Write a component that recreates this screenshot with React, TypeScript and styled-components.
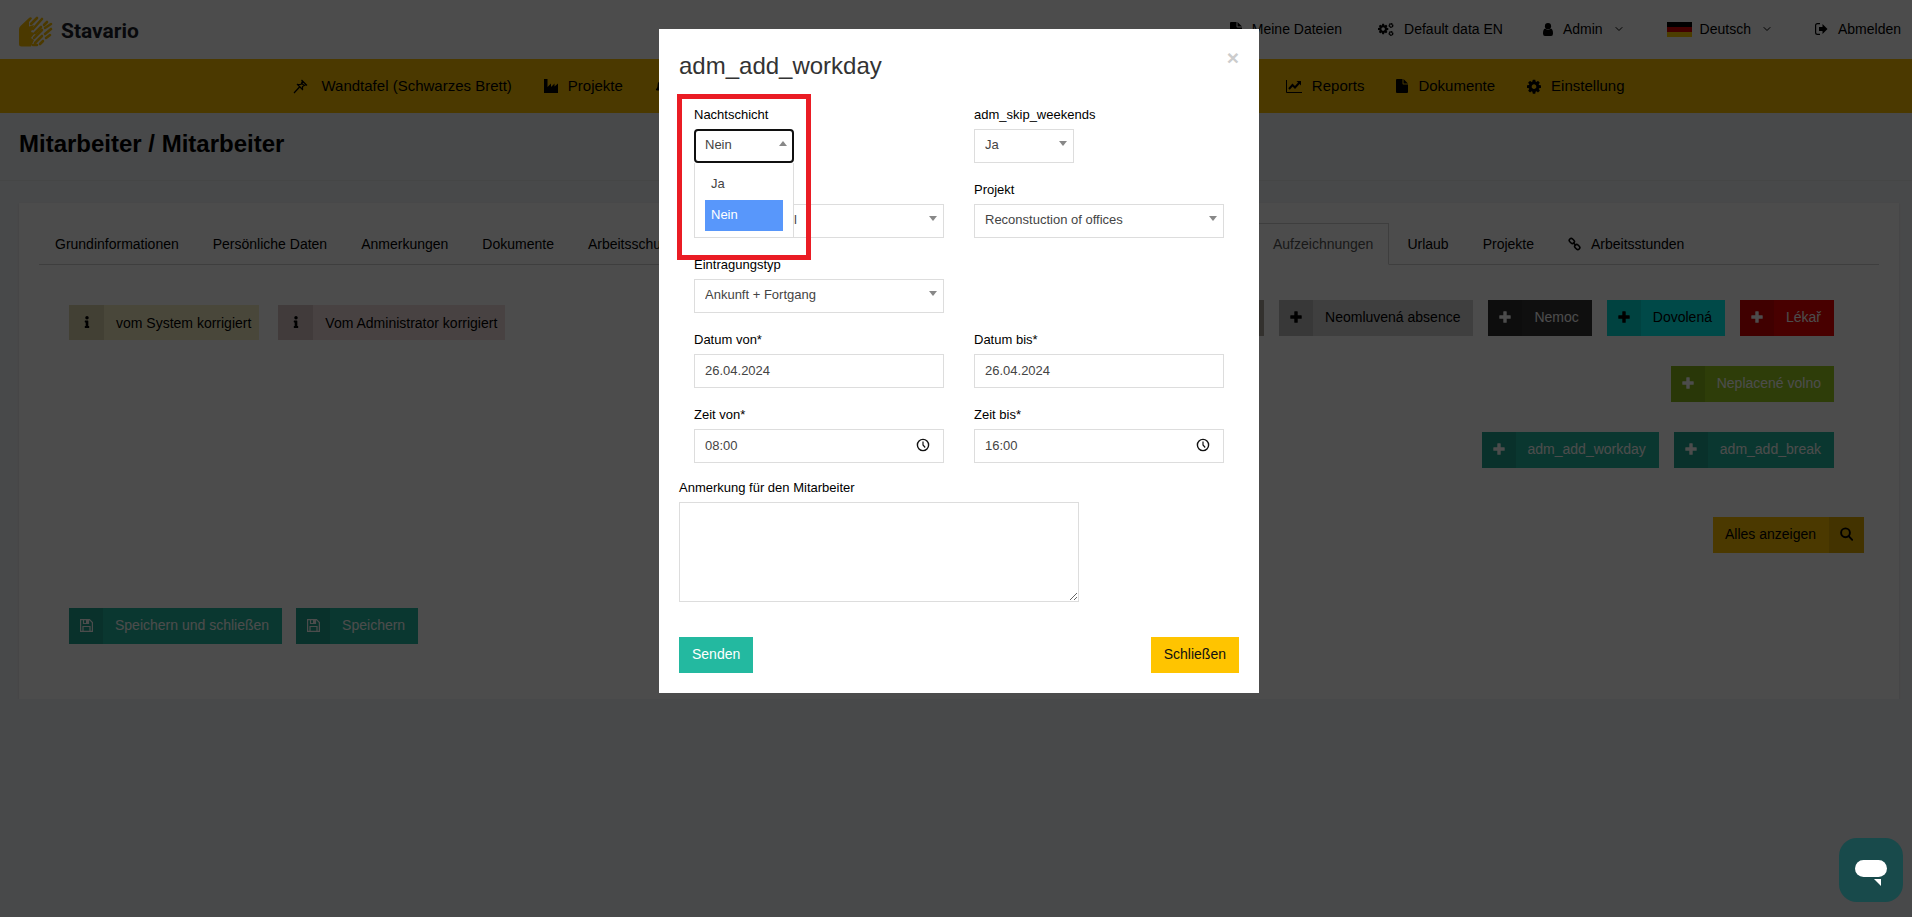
import React from "react";
import styled, { createGlobalStyle } from "styled-components";
import { FaInfo, FaBell } from "react-icons/fa";
import { FiChevronDown } from "react-icons/fi";

const Global = createGlobalStyle`
  * { box-sizing: border-box; }
  html, body { margin: 0; min-height: 100%; background: #f1f3f7; }
  body { overflow: hidden; font: 14px/20px "Liberation Sans", Arial, sans-serif; color: #000; }
  button, input, select, textarea { font: inherit; color: inherit; }
  a { color: inherit; text-decoration: none; }
  svg { flex: none; }
`;

const Header = styled.header`
  height: 59px; padding: 0 11px 0 18px; background: #fff;
  display: flex; align-items: center; justify-content: space-between;
`;
const Brand = styled.a`
  display: flex; align-items: center; gap: 8px; padding-top: 3px;
  font: 700 21px/30px Roboto, sans-serif; color: #1c1e2b;
`;
const TopLinks = styled.nav`display: flex; align-items: center; padding-bottom: 1px;`;
const TopLink = styled.a<{ $space: number }>`
  display: flex; align-items: center; gap: 10px; margin-left: ${(p) => p.$space}px;
`;
const Flag = styled.span`
  width: 25px; height: 15px; margin-right: -2px;
  background: linear-gradient(#000 0 5px, #d00 5px 10px, #fc0 10px 15px);
`;
const MainNav = styled.nav`
  height: 54px; padding-left: 6px; background: #fbc000; font-size: 15px;
  display: flex; align-items: center; justify-content: center; gap: 32px;
`;
const NavLink = styled.a<{ $gap?: number }>`
  display: flex; align-items: center; gap: ${(p) => p.$gap ?? 10}px;
`;
const NavRest = styled.span`width: 553px;`;
const Heading = styled.div`
  height: 68px; padding: 17px 19px; border-bottom: 1px solid #e7eaec;
`;
const PageTitle = styled.h1`margin: 0; font-size: 24px; line-height: 28px;`;
const Card = styled.main`
  margin: 22px 13px 0 19px; padding: 20px 20px 55px; min-height: 496px; background: #fff;
  box-shadow: 0 1px 2px rgba(0,0,0,.1);
`;
const Tabs = styled.nav`display: flex; gap: 2px; border-bottom: 1px solid #d0d0d0;`;
const Tab = styled.a<{ $active?: boolean }>`
  display: flex; align-items: center; gap: 10px; height: 42px; padding: 0 15px; margin-bottom: -1px;
  border: 1px solid transparent;
  ${(p) => p.$active && "border-color: #d0d0d0 #d0d0d0 #fff;"}
  color: ${(p) => (p.$active ? "#555" : "#000")}; background: ${(p) => (p.$active ? "#fff" : "none")};
`;
const TabRest = styled.span`width: 565px;`;
const Records = styled.section`
  display: flex; justify-content: space-between; padding: 35px 45px 0 30px;
`;
const Legend = styled.div`display: flex; gap: 19px; padding-top: 5px;`;
const LegendItem = styled.span<{ $bg: string }>`
  display: flex; align-items: center; height: 35px; padding-right: 8px; background: ${(p) => p.$bg};
`;
const IconCell = styled.span<{ $wide?: boolean }>`
  width: ${(p) => (p.$wide ? 35 : 34)}px; height: 100%; background: rgba(0,0,0,.1);
  display: flex; align-items: center; justify-content: center; padding-bottom: 2px;
`;
const LegendText = styled.span`padding-left: 12px;`;
const ActionRows = styled.div`display: flex; flex-direction: column; align-items: flex-end; gap: 30px;`;
const ButtonRow = styled.div`display: flex; gap: 15px;`;
const SaveRow = styled(ButtonRow)`gap: 14px; padding: 55px 30px 0;`;
const ShowRow = styled(ButtonRow)`justify-content: flex-end; padding: 49px 15px 0;`;
const ActionButton = styled.button<{ $bg: string; $fg?: string }>`
  display: flex; align-items: center; height: 36px; padding: 0; border: 0;
  background: ${(p) => p.$bg}; color: ${(p) => p.$fg ?? "#fff"};
`;
const ActionStub = styled.span`width: 60px; height: 36px; background: #aaa49a;`;
const ButtonText = styled.span`padding: 0 13px 2px 12px; white-space: nowrap;`;

const Backdrop = styled.div`
  position: fixed; inset: 0; background: rgba(0,0,0,.7);
  display: flex; align-items: flex-start; justify-content: center; padding: 29px 0 0 6px;
`;
const Modal = styled.form`
  position: relative; width: 600px; padding: 21px 20px 20px; background: #fff;
  font-size: 13px; line-height: 19px;
`;
const ModalTitle = styled.h2`margin: 0 0 23px; font-size: 24px; line-height: 32px; font-weight: 400; color: #333;`;
const CloseX = styled.button`
  position: absolute; top: 18px; right: 20px; padding: 0; border: 0; background: none;
  font-size: 21px; line-height: 21px; font-weight: 700; color: #ccc;
`;
const Fields = styled.div`
  display: grid; grid-template-columns: 250px 250px; column-gap: 30px; row-gap: 17px; padding: 0 15px;
`;
const Field = styled.div<{ $col?: number }>`
  display: flex; flex-direction: column; gap: 5px;
  grid-column: ${(p) => p.$col ?? "auto"}; justify-content: flex-end;
`;
const SelectBox = styled.div<{ $short?: boolean; $open?: boolean }>`
  position: relative; width: ${(p) => (p.$short ? "100px" : "100%")};
  &::after {
    content: ""; position: absolute; right: 7px; top: 12px; border: 4px solid transparent;
    ${(p) => (p.$open ? "border-bottom: 5px solid #888; border-top: 0;" : "border-top: 5px solid #888; border-bottom: 0;")}
  }
`;
const Select = styled.select<{ $open?: boolean; $covered?: boolean }>`
  appearance: none; display: block; width: 100%; height: 34px; background: #fff; color: #444;
  outline: 0;
  border: ${(p) => (p.$open ? "2px solid #101010" : "1px solid #ddd")};
  border-radius: ${(p) => (p.$open ? 4 : 0)}px;
  padding: ${(p) => (p.$open ? "0 9px 3px" : p.$covered ? "0 10px 4px 99px" : "0 10px 4px")};
`;
const Input = styled.input`
  display: block; height: 34px; padding: 0 10px 2px; border: 1px solid #ddd; background: #fff; color: #444; width: 100%;
`;
const TimeBox = styled.div`
  position: relative;
  svg { position: absolute; right: 14px; top: 9px; }
`;
const Options = styled.div`
  position: absolute; z-index: 1; top: 100%; left: 0; width: 100px; height: 74px; padding: 6px 10px 0;
  background: #fff; border: 1px solid #ddd; border-width: 0 1px;
`;
const Option = styled.div<{ $on?: boolean }>`
  height: 31px; padding: 5px 6px 7px; color: ${(p) => (p.$on ? "#fff" : "#444")};
  background: ${(p) => (p.$on ? "#5897fb" : "none")};
`;
const Note = styled.div`
  display: flex; flex-direction: column; gap: 5px; padding-top: 15px;
`;
const TextArea = styled.textarea`width: 400px; height: 100px; border: 1px solid #ddd; display: block; resize: both;`;
const ModalFooter = styled.div`display: flex; justify-content: space-between; padding-top: 35px;`;
const FooterButton = styled.button<{ $main?: boolean }>`
  height: 36px; padding: 0 13px 2px; border: 0; font-size: 14px;
  background: ${(p) => (p.$main ? "#23b9a0" : "#ffc400")};
  color: ${(p) => (p.$main ? "#fff" : "#111")};
`;
const Highlight = styled.div`
  position: absolute; z-index: 2; left: 18px; top: 65px; width: 134px; height: 166px;
  border: 5px solid #ea1c24; pointer-events: none;
`;
const Chat = styled.button`
  position: fixed; right: 9px; bottom: 15px; width: 64px; height: 64px; padding: 0;
  border: 0; border-radius: 18px; background: #184a4b;
  svg { display: block; }
`;

const COG =
  "M1024 896q0-106-75-181t-181-75-181 75-75 181 75 181 181 75 181-75 75-181zm512-109v222q0 12-8 23t-20 13l-185 28q-19 54-39 91 35 50 107 138 10 12 10 25t-9 23q-27 37-99 108t-94 71q-12 0-26-9l-138-108q-44 23-91 38-16 136-29 186-7 28-36 28h-222q-14 0-24.500-8.500t-11.500-21.500l-28-184q-49-16-90-37l-141 107q-10 9-25 9-14 0-25-11-126-114-165-168-7-10-7-23 0-12 8-23 15-21 51-66.500t54-70.500q-27-50-41-99l-183-27q-13-2-21-12.500t-8-23.500v-222q0-12 8-23t19-13l186-28q14-46 39-92-40-57-107-138-10-12-10-24 0-10 9-23 26-36 98.500-107.500t94.500-71.500q13 0 26 10l138 107q44-23 91-38 16-136 29-186 7-28 36-28h222q14 0 24.500 8.500t11.500 21.500l28 184q49 16 90 37l142-107q9-9 24-9 13 0 25 10 129 119 165 170 7 8 7 22 0 12-8 23-15 21-51 66.500t-54 70.500q26 50 41 98l183 28q13 2 21 12.500t8 23.500z";

const Logo = () => (
  <svg width="35" height="31" viewBox="0 0 35 31" fill="none" stroke="#fbc000" strokeLinecap="round">
    <path d="M1 13Q1 11 3 9.500L11 2Q13 .5 14 2.500L11 6v4.500L16 9l-3 7 4 1-4 5 3 2-3 6.500H3.500Q1 30.500 1 28Z" fill="#fbc000" stroke="none" />
    <path d="M13 8l6-6M15 13 24 3M17 17l6-6M26 9l3-3M16 22l8-8M27 12l6-4M17 27l7-7M27 18l6-5M22 28l3-3M28 22l4-3M15 29h4" strokeWidth="2.600" />
  </svg>
);
const Factory = () => (
  <svg width="14" height="14" viewBox="0 0 14 14"><path d="M0 0h3.500v8l3.500-3.500v3.500l3.500-3.500v3l3.500-3v9.500H0Z" /></svg>
);
const Pin = () => (
  <svg width="15" height="15" viewBox="0 0 15 15" fill="none" stroke="#000" strokeWidth="1.200">
    <path d="M8.500 1l5.500 5.500M9.500 2 8 5.500 4.500 5.500M13 5.500 9.500 7.500V11M4 5l6 6M6.500 8 1 14M9 4.500l2 2" />
  </svg>
);
const Graph = () => (
  <svg width="16" height="14" viewBox="0 0 16 14" fill="none" stroke="#000">
    <path d="M.5 1v12.500H16" /><path d="M3 10l3.500-4 2.500 2.500L13.500 3.500" strokeWidth="2" /><path d="M10.500 2H15V6.500Z" fill="#000" stroke="none" />
  </svg>
);
const Cog = () => <svg width="14" height="15" viewBox="0 80 1536 1600"><path d={COG} /></svg>;
const Cogs = () => (
  <svg width="16" height="15" viewBox="0 0 16 15" fill="none" stroke="#000">
    <path d={COG} transform="translate(0 1) scale(.0067)" fill="#000" stroke="none" />
    <circle cx="13" cy="3.500" r="1.700" strokeWidth="1.500" strokeDasharray="1.500 .3" />
    <circle cx="13" cy="11.500" r="1.700" strokeWidth="1.500" strokeDasharray="1.500 .3" />
  </svg>
);
const Doc = () => (
  <svg width="12" height="14" viewBox="0 0 12 14"><path d="M0 1Q0 0 1 0H6.500V4.500Q6.500 5.500 7.500 5.500H12V13Q12 14 11 14H1Q0 14 0 13ZM7.500 0 12 4.500H7.500Z" /></svg>
);
const Person = () => (
  <svg width="10" height="13" viewBox="0 0 10 13"><circle cx="5" cy="3.200" r="3.100" /><path d="M2.200 5.500Q5 8 7.800 5.500 10 6 10 10.500 10 13 8 13H2Q0 13 0 10.500 0 6 2.200 5.500Z" /></svg>
);
const Exit = () => (
  <svg width="13" height="12" viewBox="0 0 13 12"><path d="M5 .6H2.500Q.6.6.6 2.500v7Q.6 11.400 2.500 11.400H5" fill="none" stroke="#000" strokeWidth="1.200" /><path d="M4 4h3.500V1L12.500 6 7.500 11V8H4Z" /></svg>
);
const Chain = () => (
  <svg width="13" height="14" viewBox="0 0 13 14" fill="none" stroke="#000" strokeWidth="1.600">
    <rect x="-1.900" y="-2.800" width="3.900" height="5.600" rx="1.900" transform="translate(3.800 4) rotate(-45)" />
    <rect x="-1.900" y="-2.800" width="3.900" height="5.600" rx="1.900" transform="translate(9.200 10) rotate(-45)" />
    <path d="M5 5.500l3 3" />
  </svg>
);
const Lens = () => (
  <svg width="13" height="14" viewBox="0 0 13 14" fill="none" stroke="currentColor" strokeWidth="1.900">
    <circle cx="5.500" cy="5.800" r="4.400" /><path d="M8.700 9.200l3.500 3.600" strokeLinecap="round" />
  </svg>
);
const Plus = () => (
  <svg width="12" height="12" viewBox="0 0 12 12" fill="currentColor">
    <path d="M4.300.8Q4.300.3 4.800.3H7.200Q7.700.3 7.700.8V4.300H11.200Q11.700 4.300 11.700 4.800V7.200Q11.700 7.700 11.200 7.700H7.700V11.200Q7.700 11.700 7.200 11.700H4.800Q4.300 11.700 4.300 11.200V7.700H.8Q.3 7.700.3 7.200V4.800Q.3 4.300.8 4.300H4.300Z" />
  </svg>
);
const Floppy = () => (
  <svg width="13" height="13" viewBox="0 0 13 13" fill="none" stroke="currentColor">
    <path d="M.6.6h8.900l2.900 2.900v8.900H.6ZM3 12V7.500h7V12M3.500.5V4.500h5V.5" strokeWidth="1.200" /><path d="M6 1h2v3H6Z" fill="currentColor" stroke="none" />
  </svg>
);
const Clock = () => (
  <svg width="14" height="14" viewBox="0 0 14 14" fill="none" stroke="#111" strokeWidth="1.400">
    <circle cx="7" cy="7" r="5.600" /><path d="M7 3.500V7l2.200 2.500" strokeWidth="1.200" />
  </svg>
);

type ActionProps = { bg: string; fg?: string; icon?: React.ReactNode; children: React.ReactNode };
const Action = ({ bg, fg, icon = <Plus />, children }: ActionProps) => (
  <ActionButton type="button" $bg={bg} $fg={fg}>
    <IconCell>{icon}</IconCell>
    <ButtonText>{children}</ButtonText>
  </ActionButton>
);

type PickProps = { id: string; label: string; value: string; short?: boolean; col?: number };
const Pick = ({ id, label, value, short, col }: PickProps) => (
  <Field $col={col}>
    <label htmlFor={id}>{label}</label>
    <SelectBox $short={short}>
      <Select id={id}><option>{value}</option></Select>
    </SelectBox>
  </Field>
);

const Entry = ({ id, label, value, time }: { id: string; label: string; value: string; time?: boolean }) => (
  <Field>
    <label htmlFor={id}>{label}</label>
    {time ? <TimeBox><Input id={id} defaultValue={value} /><Clock /></TimeBox> : <Input id={id} defaultValue={value} />}
  </Field>
);

export default function App() {
  return (
    <>
      <Global />
      <Header>
        <Brand href="#"><Logo />Stavario</Brand>
        <TopLinks>
          <TopLink href="#" $space={0}><Doc />Meine Dateien</TopLink>
          <TopLink href="#" $space={36}><Cogs />Default data EN</TopLink>
          <TopLink href="#" $space={40}><Person />Admin<FiChevronDown size={12} /></TopLink>
          <TopLink href="#" $space={42}><Flag />Deutsch<FiChevronDown size={12} /></TopLink>
          <TopLink href="#" $space={42}><Exit />Abmelden</TopLink>
        </TopLinks>
      </Header>
      <MainNav>
        <NavLink href="#" $gap={13}><Pin />Wandtafel (Schwarzes Brett)</NavLink>
        <NavLink href="#"><Factory />Projekte</NavLink>
        <FaBell size={14} />
        <NavRest />
        <NavLink href="#"><Graph />Reports</NavLink>
        <NavLink href="#"><Doc />Dokumente</NavLink>
        <NavLink href="#"><Cog />Einstellung</NavLink>
      </MainNav>
      <Heading><PageTitle>Mitarbeiter / Mitarbeiter</PageTitle></Heading>
      <Card>
        <Tabs>
          <Tab href="#">Grundinformationen</Tab>
          <Tab href="#">Persönliche Daten</Tab>
          <Tab href="#">Anmerkungen</Tab>
          <Tab href="#">Dokumente</Tab>
          <Tab href="#">Arbeitsschutz</Tab>
          <TabRest />
          <Tab href="#" $active>Aufzeichnungen</Tab>
          <Tab href="#">Urlaub</Tab>
          <Tab href="#">Projekte</Tab>
          <Tab href="#"><Chain />Arbeitsstunden</Tab>
        </Tabs>
        <Records>
          <Legend>
            <LegendItem $bg="#f6efc4"><IconCell $wide><FaInfo size={12} /></IconCell><LegendText>vom System korrigiert</LegendText></LegendItem>
            <LegendItem $bg="#f2dede"><IconCell $wide><FaInfo size={12} /></IconCell><LegendText>Vom Administrator korrigiert</LegendText></LegendItem>
          </Legend>
          <ActionRows>
            <ButtonRow>
              <ActionStub />
              <Action bg="#d2d2d2" fg="#000">Neomluvená absence</Action>
              <Action bg="#333">Nemoc</Action>
              <Action bg="#00f5f0" fg="#000">Dovolená</Action>
              <Action bg="#f00000">Lékař</Action>
            </ButtonRow>
            <ButtonRow><Action bg="#9acd20">Neplacené volno</Action></ButtonRow>
            <ButtonRow>
              <Action bg="#23b9a0">adm_add_workday</Action>
              <Action bg="#23b9a0">adm_add_break</Action>
            </ButtonRow>
          </ActionRows>
        </Records>
        <ShowRow>
          <ActionButton type="button" $bg="#fbc000" $fg="#000">
            <ButtonText>Alles anzeigen</ButtonText><IconCell $wide><Lens /></IconCell>
          </ActionButton>
        </ShowRow>
        <SaveRow>
          <Action bg="#23b9a0" icon={<Floppy />}>Speichern und schließen</Action>
          <Action bg="#23b9a0" icon={<Floppy />}>Speichern</Action>
        </SaveRow>
      </Card>

      <Backdrop>
        <Modal role="dialog" aria-labelledby="dialog-title">
          <ModalTitle id="dialog-title">adm_add_workday</ModalTitle>
          <CloseX type="button">×</CloseX>
          <Fields>
            <Field>
              <label htmlFor="night">Nachtschicht</label>
              <SelectBox $short $open>
                <Select id="night" $open defaultValue="Nein"><option>Nein</option></Select>
                <Options role="listbox">
                  <Option role="option">Ja</Option>
                  <Option role="option" aria-selected $on>Nein</Option>
                </Options>
              </SelectBox>
            </Field>
            <Pick id="skip" label="adm_skip_weekends" value="Ja" short />
            <Field>
              <SelectBox>
                <Select $covered aria-label="Mitarbeiter"><option>l</option></Select>
              </SelectBox>
            </Field>
            <Pick id="project" label="Projekt" value="Reconstuction of offices" />
            <Pick id="kind" label="Eintragungstyp" value="Ankunft + Fortgang" col={1} />
            <Field />
            <Entry id="date-from" label="Datum von*" value="26.04.2024" />
            <Entry id="date-to" label="Datum bis*" value="26.04.2024" />
            <Entry id="time-from" label="Zeit von*" value="08:00" time />
            <Entry id="time-to" label="Zeit bis*" value="16:00" time />
          </Fields>
          <Note>
            <label htmlFor="note">Anmerkung für den Mitarbeiter</label>
            <TextArea id="note" />
          </Note>
          <ModalFooter>
            <FooterButton type="submit" $main>Senden</FooterButton>
            <FooterButton type="button">Schließen</FooterButton>
          </ModalFooter>
          <Highlight />
        </Modal>
      </Backdrop>
      <Chat type="button" aria-label="Chat">
        <svg width="64" height="64" viewBox="0 0 64 64" fill="#fff">
          <rect x="16" y="22" width="32" height="17" rx="8.500" /><path d="M35 41h7v7Z" />
        </svg>
      </Chat>
    </>
  );
}
